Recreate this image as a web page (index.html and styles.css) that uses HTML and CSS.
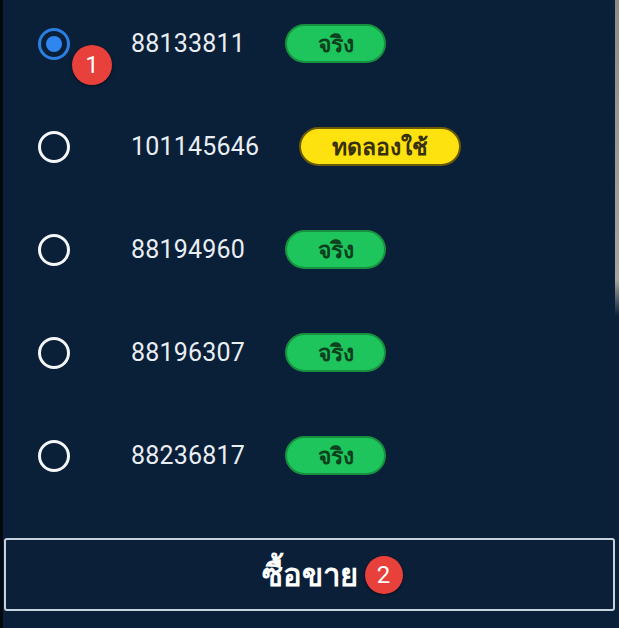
FILE: index.html
```html
<!DOCTYPE html>
<html lang="th">
<head>
    <meta charset="UTF-8">
    <meta name="viewport" content="width=device-width, initial-scale=1.0">
    <title>Accounts</title>
    <link rel="stylesheet" href="styles.css">
</head>
<body>
    <div class="sheet">
        <div class="panel">
            <!-- Account list -->
            <ul class="accounts">
                <li class="account">
                    <span class="radio checked">
                        <span class="step step-one">1</span>
                    </span>
                    <span class="number">88133811</span>
                    <span class="tag tag-real">จริง</span>
                </li>
                <li class="account">
                    <span class="radio"></span>
                    <span class="number">101145646</span>
                    <span class="tag tag-demo">ทดลองใช้</span>
                </li>
                <li class="account">
                    <span class="radio"></span>
                    <span class="number">88194960</span>
                    <span class="tag tag-real">จริง</span>
                </li>
                <li class="account">
                    <span class="radio"></span>
                    <span class="number">88196307</span>
                    <span class="tag tag-real">จริง</span>
                </li>
                <li class="account">
                    <span class="radio"></span>
                    <span class="number">88236817</span>
                    <span class="tag tag-real">จริง</span>
                </li>
            </ul>

            <button class="trade-button">
                <span class="trade-label">ซื้อขาย<span class="step step-two">2</span></span>
            </button>
        </div>
        <div class="edge"></div>
    </div>
</body>
</html>
```

FILE: styles.css
```css
body {
    margin: 0;
    background-color: #0a1f38;
    font-family: Roboto, "Noto Sans", sans-serif;
    color: #e9eef3;
}

.sheet {
    display: flex;
    height: 628px;
    border-left: 3px solid #03080e;
    overflow: hidden;
}

.panel {
    flex: 1;
    display: flex;
    flex-direction: column;
}

.edge {
    width: 4px;
    background: linear-gradient(#8d8b84 0, #a6a49c 280px, #0c2038 316px);
}

.accounts {
    list-style: none;
    margin: 0;
    padding: 24px 0 0 35px;
    display: flex;
    flex-direction: column;
    gap: 64px;
}

.account {
    display: flex;
    align-items: center;
    height: 39px;
}

.radio {
    position: relative;
    box-sizing: border-box;
    width: 32px;
    height: 32px;
    border: 3px solid #f4f6f8;
    border-radius: 50%;
    margin-right: 61px;
    flex-shrink: 0;
}

.radio.checked {
    border-color: #2c7fe0;
}

.radio.checked::after {
    content: "";
    position: absolute;
    left: 5px;
    top: 5px;
    width: 16px;
    height: 16px;
    border-radius: 50%;
    background-color: #2f86f0;
}

.number {
    font-size: 25px;
    letter-spacing: 0.2px;
    margin-right: 40px;
}

.tag {
    box-sizing: border-box;
    height: 39px;
    border-radius: 20px;
    display: flex;
    align-items: center;
    justify-content: center;
    font-weight: bold;
    font-size: 23px;
}

.tag-real {
    width: 101px;
    background-color: #1ec55c;
    border: 2px solid #17913f;
    color: #0c3f1e;
}

.tag-demo {
    width: 162px;
    background-color: #fde210;
    border: 2px solid #6b5a06;
    color: #38300a;
}

.step {
    position: absolute;
    z-index: 1;
    width: 40px;
    height: 40px;
    border-radius: 50%;
    background-color: #e8403a;
    color: #fff;
    font-family: Roboto, sans-serif;
    font-size: 24px;
    font-weight: normal;
    display: flex;
    align-items: center;
    justify-content: center;
    box-shadow: 0 1px 3px rgba(0, 0, 0, 0.5);
}

.step-one {
    left: 31px;
    top: 14px;
}

.step-two {
    left: calc(100% + 7px);
    top: 50%;
    margin-top: -19px;
    width: 38px;
    height: 38px;
}

.trade-button {
    margin: 63px 0 0 1px;
    height: 73px;
    background-color: #0b1f38;
    border: 2px solid #c5d1dc;
    border-radius: 3px;
    color: #fff;
    font-family: Roboto, "Noto Sans", sans-serif;
    font-size: 31px;
    font-weight: bold;
    cursor: pointer;
}

.trade-label {
    position: relative;
}
```
